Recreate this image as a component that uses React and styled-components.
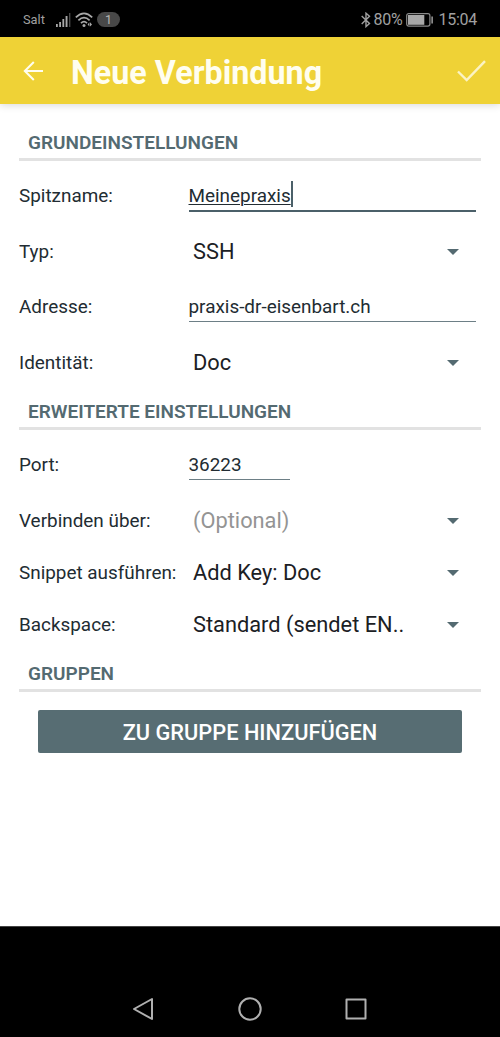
import React from "react";
import styled, { createGlobalStyle } from "styled-components";

const Global = createGlobalStyle`
  * { box-sizing: border-box; }
  body { margin: 0; background: #fff; font-family: Roboto, "Liberation Sans", sans-serif; }
`;

const Screen = styled.div`
  width: 500px;
  height: 1037px;
  display: flex;
  flex-direction: column;
  background: #fff;
  overflow: hidden;
`;

const StatusBar = styled.header`
  height: 37px;
  flex: none;
  display: flex;
  align-items: center;
  justify-content: space-between;
  padding: 2px 23px 0;
  background: #000;
  color: #a0a0a0;
`;

const StatusGroup = styled.div`
  display: flex;
  align-items: center;
`;

const Carrier = styled.span`
  width: 33px;
  font-size: 12.8px;
  line-height: 16px;
`;

const Badge = styled.span`
  width: 23px;
  height: 15px;
  margin-left: 4px;
  border-radius: 8px;
  background: #484848;
  color: #b4b4b4;
  font-size: 12.5px;
  line-height: 16px;
  text-align: center;
`;

const StatusText = styled.span`
  margin-left: ${(p) => p.$gap}px;
  font-size: 16px;
  line-height: 18px;
  letter-spacing: ${(p) => p.$spacing || 0}px;
`;

const AppBar = styled.div`
  height: 66.5px;
  flex: none;
  display: flex;
  align-items: center;
  padding: 2px 14px 0 23px;
  background: #efd236;
  box-shadow: 0 1px 8px rgba(0, 0, 0, 0.16);
  color: #fffef0;
`;

const Title = styled.h1`
  flex: 1;
  margin: 3px 0 0 27px;
  font-size: 32.3px;
  font-weight: 700;
  line-height: 40px;
`;

const Form = styled.main`
  flex: 1;
  display: flex;
  flex-direction: column;
  padding: 0 19px;
`;

const SectionTitle = styled.h2`
  height: ${(p) => p.$height}px;
  margin: 0 0 ${(p) => p.$gap}px;
  padding: 0 10px 5.5px 9px;
  display: flex;
  align-items: flex-end;
  border-bottom: 3px solid #e2e2e2;
  color: #546a71;
  font-size: 19px;
  font-weight: 600;
  line-height: 20px;
`;

const Row = styled.div`
  height: ${(p) => p.$height || 55.5}px;
  margin-bottom: ${(p) => p.$after || 0}px;
  display: flex;
  align-items: center;
  color: #222c32;
`;

const Label = styled.label`
  width: 169.5px;
  flex: none;
  padding-top: ${(p) => (p.$select ? 1 : 0)}px;
  font-size: 18.9px;
  line-height: 24px;
`;

const Field = styled.div`
  width: ${(p) => p.$width || 287.5}px;
  height: 32px;
  margin-top: ${(p) => (p.$active ? 0 : -2)}px;
  padding-top: ${(p) => (p.$active ? 0 : 2)}px;
  display: flex;
  align-items: flex-start;
  border-bottom: ${(p) => (p.$active ? "2px solid #4b6069" : "1px solid #6d7f86")};
  font-size: 18.9px;
  line-height: 30px;
`;

const Composing = styled.span`
  padding-top: 0.5px;
  text-decoration: underline;
  text-decoration-thickness: 1px;
  text-underline-offset: 2px;
`;

const Caret = styled.i`
  width: 2px;
  height: 26px;
  margin-top: 1px;
  background: #4b6069;
`;

const Select = styled.div`
  width: 270px;
  padding: 1px 0 0 4.5px;
  display: flex;
  align-items: center;
  justify-content: space-between;
  color: ${(p) => (p.$hint ? "#949494" : "#1b2024")};
  font-size: 21.8px;
  line-height: 28px;
`;

const AddButton = styled.button`
  height: 42.5px;
  margin: 18px 19px 0;
  border: 0;
  border-radius: 2px;
  background: #576d73;
  color: #fff;
  font: 500 21.8px/43px Roboto, sans-serif;
`;

const NavBar = styled.nav`
  height: 111px;
  flex: none;
  display: flex;
  justify-content: space-between;
  padding: 70px 132px 0 131px;
  border-top: 1px solid #444;
  background: #000;
`;

const ArrowIcon = styled.svg`
  margin-top: -1px;
`;

const Arrow = () => (
  <ArrowIcon width="12" height="6" viewBox="0 0 12 6"><path d="M0 0H12L6 6Z" fill="#546a71" /></ArrowIcon>
);

const Signal = () => (
  <svg width="16" height="14" viewBox="0 0 16 14" fill="#a8a8a8">
    <path d="M0 11h1.8v3H0zM3.2 9H5v5H3.2zM6.4 6h1.8v8H6.4zM9.6 3h1.9v11H9.6z" />
    <path d="M13 0h1.4v14H13z" fill="#484848" />
  </svg>
);

const Wifi = () => (
  <svg width="18" height="16" viewBox="0 0 18 16" fill="none" stroke="#a8a8a8" strokeWidth="1.7">
    <path d="M.8 5.4Q9-2.6 17.2 5.4M3.4 8.4Q9 3 14.6 8.4M6 11.2Q9 8.2 12 11.2" />
    <circle cx="9" cy="13.4" r="1.5" fill="#a8a8a8" stroke="none" />
    <path d="M12.6 12.4L14.4 10.2V14.6ZM15 10.2L17 12.4L15 14.6Z" fill="#a8a8a8" stroke="none" />
  </svg>
);

const Bluetooth = () => (
  <svg width="10" height="16" viewBox="0 0 10 16" fill="none" stroke="#a0a0a0" strokeWidth="1.4">
    <path d="M.7 4L8.5 11.5L5 14.6V1.2L8.5 4.3L.7 12" />
  </svg>
);

const BatteryIcon = styled.svg`
  margin-left: 4px;
`;

const Battery = () => (
  <BatteryIcon width="28" height="14" viewBox="0 0 28 14">
    <rect x=".7" y=".7" width="23.2" height="12.4" rx="2" fill="none" stroke="#8a8a8a" strokeWidth="1.2" />
    <rect x="2" y="2" width="16.3" height="9.8" fill="#a8a8a8" />
    <path d="M25.3 3.5h1.7v7h-1.7z" fill="#8a8a8a" />
  </BatteryIcon>
);

const Icons = styled.div`
  display: flex;
  align-items: center;
  gap: 3px;
`;

const SelectRow = ({ label, value, height, hint }) => (
  <Row $height={height}>
    <Label $select>{label}</Label>
    <Select $hint={hint}><span>{value}</span><Arrow /></Select>
  </Row>
);

export default function App() {
  return (
    <Screen>
      <Global />
      <StatusBar>
        <StatusGroup>
          <Carrier>Salt</Carrier>
          <Icons>
            <Signal />
            <Wifi />
          </Icons>
          <Badge>1</Badge>
        </StatusGroup>
        <StatusGroup>
          <Bluetooth />
          <StatusText $gap={2.5} $spacing={-0.3}>80%</StatusText>
          <Battery />
          <StatusText $gap={4} $spacing={-0.25}>15:04</StatusText>
        </StatusGroup>
      </StatusBar>
      <AppBar>
        <svg width="21" height="20" viewBox="0 0 21 20" fill="none" stroke="currentColor" strokeWidth="2">
          <path d="M20 10H2M10.8 1L1.8 10L10.8 19" />
        </svg>
        <Title>Neue Verbindung</Title>
        <svg width="29" height="22" viewBox="0 0 29 22" fill="none" stroke="#fbf3c4" strokeWidth="2.4">
          <path d="M1 11.5L9.7 20L28 1.2" />
        </svg>
      </AppBar>
      <Form>
        <SectionTitle $height={57.5} $gap={7.5}>GRUNDEINSTELLUNGEN</SectionTitle>
        <Row>
          <Label>Spitzname:</Label>
          <Field $active><Composing>Meinepraxis</Composing><Caret /></Field>
        </Row>
        <SelectRow label="Typ:" value="SSH" />
        <Row>
          <Label>Adresse:</Label>
          <Field>praxis-dr-eisenbart.ch</Field>
        </Row>
        <SelectRow label="Identität:" value="Doc" />
        <SectionTitle $height={39.5} $gap={6}>ERWEITERTE EINSTELLUNGEN</SectionTitle>
        <Row $height={57.5} $after={1}>
          <Label $select>Port:</Label>
          <Field $width={101.5}>36223</Field>
        </Row>
        <SelectRow label="Verbinden über:" value="(Optional)" height={52} hint />
        <SelectRow label="Snippet ausführen:" value="Add Key: Doc" height={52} />
        <SelectRow label="Backspace:" value="Standard (sendet EN.." height={52} />
        <SectionTitle $height={41.5} $gap={0}>GRUPPEN</SectionTitle>
        <AddButton>ZU GRUPPE HINZUFÜGEN</AddButton>
      </Form>
      <NavBar>
        <svg width="24" height="24" viewBox="0 0 24 24" fill="none" stroke="#b0b0b0" strokeWidth="2" strokeLinejoin="round">
          <path d="M21 2V22L3 12Z" />
        </svg>
        <svg width="24" height="24" viewBox="0 0 24 24" fill="none" stroke="#b0b0b0" strokeWidth="2">
          <circle cx="12" cy="12" r="10.7" />
        </svg>
        <svg width="24" height="24" viewBox="0 0 24 24" fill="none" stroke="#b0b0b0" strokeWidth="2" strokeLinejoin="round">
          <rect x="2.5" y="2.5" width="19" height="19" />
        </svg>
      </NavBar>
    </Screen>
  );
}
